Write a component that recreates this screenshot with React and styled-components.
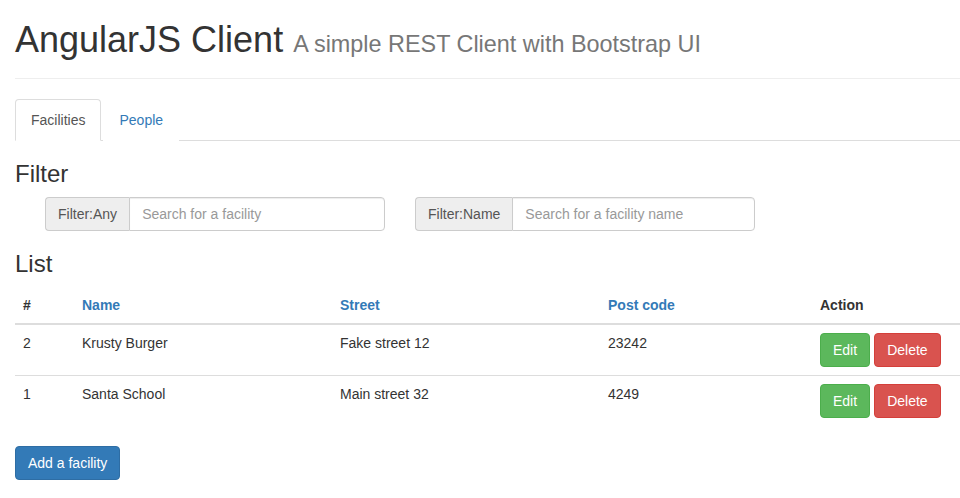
import styled, { createGlobalStyle } from 'styled-components';

const GlobalStyle = createGlobalStyle`
    html, body {
        margin: 0;
        overflow-x: hidden;
        background: #fff;
    }
    body {
        font-family: 'Liberation Sans', Arial, sans-serif;
        font-size: 14px;
        line-height: 1.42857;
        color: #333;
    }
    * {
        box-sizing: border-box;
    }
`;

const facilities = [
    { id: 2, name: 'Krusty Burger', street: 'Fake street 12', postCode: '23242' },
    { id: 1, name: 'Santa School', street: 'Main street 32', postCode: '4249' },
];

const columns = [
    { label: '#', width: 59 },
    { label: 'Name', width: 258, link: true },
    { label: 'Street', width: 268, link: true },
    { label: 'Post code', width: 212, link: true },
    { label: 'Action', width: 163 },
];

const App = () => {
    return (
        <Page>
            <GlobalStyle />
            <PageHeader>
                <h1>
                    AngularJS Client <small>A simple REST Client with Bootstrap UI</small>
                </h1>
            </PageHeader>

            <Tabs>
                <Tab active>Facilities</Tab>
                <Tab>People</Tab>
            </Tabs>

            <Heading>Filter</Heading>
            <FilterRow>
                <InputGroup>
                    <Addon>Filter:Any</Addon>
                    <Field placeholder="Search for a facility" />
                </InputGroup>
                <InputGroup>
                    <Addon>Filter:Name</Addon>
                    <Field placeholder="Search for a facility name" />
                </InputGroup>
            </FilterRow>

            <Heading>List</Heading>
            <Table>
                <thead>
                    <tr>
                        {columns.map((c) => (
                            <Th key={c.label} $width={c.width} $link={c.link}>
                                {c.label}
                            </Th>
                        ))}
                    </tr>
                </thead>
                <tbody>
                    {facilities.map((f) => (
                        <tr key={f.id}>
                            <Td>{f.id}</Td>
                            <Td>{f.name}</Td>
                            <Td>{f.street}</Td>
                            <Td>{f.postCode}</Td>
                            <Td>
                                <Actions>
                                    <Button $variant="success">Edit</Button>
                                    <Button $variant="danger">Delete</Button>
                                </Actions>
                            </Td>
                        </tr>
                    ))}
                </tbody>
            </Table>

            <Button $variant="primary">Add a facility</Button>
        </Page>
    );
};

export default App;

const Page = styled.div`
    width: 990px;
    padding: 0 15px;
`;

const PageHeader = styled.div`
    padding-bottom: 8px;
    margin: 0 0 20px;
    border-bottom: 1px solid #eee;
    h1 {
        margin: 20px 0 10px;
        font-size: 36px;
        font-weight: 500;
        line-height: 1.1;
        color: #333;
    }
    small {
        font-size: 65%;
        font-weight: 400;
        color: #777;
    }
`;

const Tabs = styled.div`
    display: flex;
    border-bottom: 1px solid #ddd;
`;

const Tab = styled.a`
    margin-right: 2px;
    margin-bottom: -1px;
    padding: 10px 15px;
    line-height: 20px;
    border: 1px solid ${(p) => (p.active ? '#ddd' : 'transparent')};
    border-bottom-color: transparent;
    border-radius: 4px 4px 0 0;
    background: #fff;
    color: ${(p) => (p.active ? '#555' : '#337ab7')};
    cursor: pointer;
`;

const Heading = styled.h3`
    margin: 20px 0 10px;
    font-size: 24px;
    font-weight: 500;
    line-height: 1.1;
`;

const FilterRow = styled.div`
    display: flex;
    gap: 30px;
    padding-left: 30px;
`;

const InputGroup = styled.div`
    display: flex;
    width: 340px;
    height: 34px;
`;

const Addon = styled.span`
    padding: 6px 12px;
    font-size: 14px;
    line-height: 20px;
    color: #555;
    background: #eee;
    border: 1px solid #ccc;
    border-right: 0;
    border-radius: 4px 0 0 4px;
    white-space: nowrap;
`;

const Field = styled.input`
    flex: 1;
    min-width: 0;
    height: 34px;
    padding: 6px 12px;
    font-family: inherit;
    font-size: 14px;
    line-height: 20px;
    color: #555;
    border: 1px solid #ccc;
    border-radius: 0 4px 4px 0;
    box-shadow: inset 0 1px 1px rgba(0, 0, 0, 0.075);
    outline: none;
    &::placeholder {
        color: #999;
    }
`;

const Table = styled.table`
    width: 960px;
    table-layout: fixed;
    border-collapse: collapse;
    margin-bottom: 20px;
`;

const Th = styled.th`
    width: ${(p) => p.$width}px;
    padding: 8px;
    text-align: left;
    font-weight: 700;
    line-height: 20px;
    vertical-align: bottom;
    border-bottom: 2px solid #ddd;
    color: ${(p) => (p.$link ? '#337ab7' : '#333')};
`;

const Td = styled.td`
    padding: 8px;
    line-height: 20px;
    vertical-align: top;
    tr + tr & {
        border-top: 1px solid #ddd;
    }
`;

const Actions = styled.div`
    display: flex;
    gap: 4px;
`;

const variants = {
    success: { bg: '#5cb85c', border: '#4cae4c' },
    danger: { bg: '#d9534f', border: '#d43f3a' },
    primary: { bg: '#337ab7', border: '#2e6da4' },
};

const Button = styled.button`
    display: inline-block;
    padding: 6px 12px;
    font-family: inherit;
    font-size: 14px;
    line-height: 20px;
    color: #fff;
    background: ${(p) => variants[p.$variant].bg};
    border: 1px solid ${(p) => variants[p.$variant].border};
    border-radius: 4px;
    cursor: pointer;
`;
